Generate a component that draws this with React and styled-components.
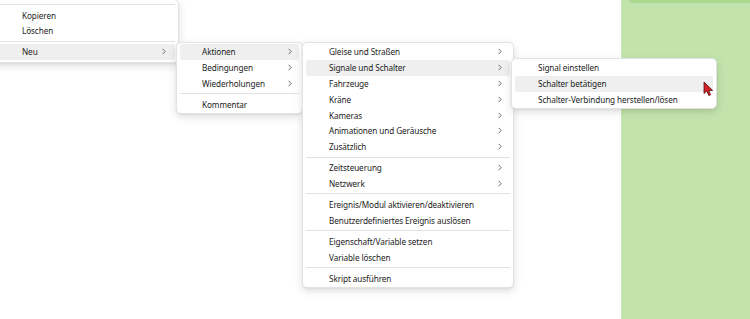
import styled, { createGlobalStyle } from 'styled-components'

const GlobalStyle = createGlobalStyle`
  html, body {
    margin: 0;
    padding: 0;
    background: #ffffff;
    overflow: hidden;
  }
  body {
    font-family: 'Noto Sans', 'Open Sans', sans-serif;
  }
`

const Screen = styled.div`
  position: relative;
  display: flex;
  width: 750px;
  height: 319px;
  overflow: hidden;
  background: #ffffff;
`

const Canvas = styled.div`
  flex: 1;
`

const GreenPanel = styled.div`
  width: 128px;
  background: #c3e3ad;
  border-left: 1px solid #c9e6b5;
  display: flex;
  flex-direction: column;
  align-items: flex-end;
  .strip {
    width: 120px;
    height: 3px;
    background: #a9d88f;
  }
`

const Menu = styled.div`
  position: absolute;
  left: ${(p) => p.x}px;
  top: ${(p) => p.y}px;
  width: ${(p) => p.w}px;
  box-sizing: border-box;
  padding: ${(p) => p.pad || 1}px 3px;
  background: #ffffff;
  border: 1px solid #e3e3e3;
  border-radius: 5px;
  box-shadow: 0 3px 8px rgba(0, 0, 0, 0.13), 0 1px 2px rgba(0, 0, 0, 0.06);
  display: flex;
  flex-direction: column;
`

const Item = styled.div`
  display: flex;
  align-items: center;
  height: 15.8px;
  padding-left: ${(p) => p.indent}px;
  padding-right: ${(p) => p.arrowPad}px;
  border-radius: 3px;
  background: ${(p) => (p.active ? '#efefef' : 'transparent')};
  color: #1b1b1b;
  font-size: 8.2px;
  letter-spacing: -0.1px;
  white-space: nowrap;
  span {
    flex: 1;
  }
`

const Separator = styled.div`
  height: 5.2px;
  display: flex;
  align-items: center;
  &::after {
    content: '';
    flex: 1;
    height: 1px;
    background: #e2e2e2;
  }
`

const Chevron = () => (
  <svg width="4" height="7" viewBox="0 0 4 7">
    <path d="M0.6 0.8 L3.2 3.5 L0.6 6.2" fill="none" stroke="#5a5a5a" strokeWidth="0.9" />
  </svg>
)

const Cursor = styled.svg`
  position: absolute;
  left: 703px;
  top: 81px;
`

const MenuList = ({ items, indent, arrowPad }) =>
  items.map((it, i) =>
    it === '-' ? (
      <Separator key={i} />
    ) : (
      <Item key={i} indent={indent} arrowPad={arrowPad} active={it.active}>
        <span>{it.label}</span>
        {it.sub && <Chevron />}
      </Item>
    )
  )

const menu1 = [
  '-',
  { label: 'Kopieren' },
  { label: 'Löschen' },
  '-',
  { label: 'Neu', sub: true, active: true },
]

const menu2 = [
  { label: 'Aktionen', sub: true, active: true },
  { label: 'Bedingungen', sub: true },
  { label: 'Wiederholungen', sub: true },
  '-',
  { label: 'Kommentar' },
]

const menu3 = [
  { label: 'Gleise und Straßen', sub: true },
  { label: 'Signale und Schalter', sub: true, active: true },
  { label: 'Fahrzeuge', sub: true },
  { label: 'Kräne', sub: true },
  { label: 'Kameras', sub: true },
  { label: 'Animationen und Geräusche', sub: true },
  { label: 'Zusätzlich', sub: true },
  '-',
  { label: 'Zeitsteuerung', sub: true },
  { label: 'Netzwerk', sub: true },
  '-',
  { label: 'Ereignis/Modul aktivieren/deaktivieren' },
  { label: 'Benutzerdefiniertes Ereignis auslösen' },
  '-',
  { label: 'Eigenschaft/Variable setzen' },
  { label: 'Variable löschen' },
  '-',
  { label: 'Skript ausführen' },
]

const menu4 = [
  { label: 'Signal einstellen' },
  { label: 'Schalter betätigen', active: true },
  { label: 'Schalter-Verbindung herstellen/lösen' },
]

export default function App() {
  return (
    <>
      <GlobalStyle />
      <Screen>
        <Canvas />
        <GreenPanel>
          <div className="strip" />
        </GreenPanel>

        <Menu x={-12} y={-1} w={191} pad={2}>
          <MenuList items={menu1} indent={30} arrowPad={9} />
        </Menu>
        <Menu x={176} y={42} w={127} pad={1}>
          <MenuList items={menu2} indent={22} arrowPad={7} />
        </Menu>
        <Menu x={302} y={42} w={212} pad={1}>
          <MenuList items={menu3} indent={23} arrowPad={8} />
        </Menu>
        <Menu x={511} y={58} w={206} pad={1}>
          <MenuList items={menu4} indent={23} arrowPad={8} />
        </Menu>

        <Cursor width="12" height="16" viewBox="0 0 12 16">
          <path
            d="M1 1 L1 12.5 L3.8 10 L5.8 14.6 L7.6 13.8 L5.7 9.4 L9.6 9.4 Z"
            fill="#d31f26"
            stroke="#5a0f12"
            strokeWidth="0.8"
            strokeLinejoin="round"
          />
        </Cursor>
      </Screen>
    </>
  )
}
